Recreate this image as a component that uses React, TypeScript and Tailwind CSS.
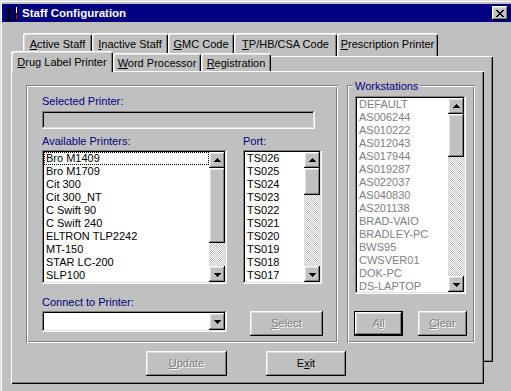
import React from "react";

const raised =
  "shadow-[inset_-1px_-1px_#000,inset_1px_1px_#fff,inset_-2px_-2px_#808080,inset_2px_2px_#dfdfdf]";
const sunken =
  "shadow-[inset_-1px_-1px_#fff,inset_1px_1px_#808080,inset_-2px_-2px_#dfdfdf,inset_2px_2px_#000]";
const etched =
  "shadow-[inset_1px_1px_#808080,inset_-1px_-1px_#fff,inset_2px_2px_#fff,inset_-2px_-2px_#808080]";
const tabEdge =
  "shadow-[inset_1px_1px_#fff,inset_2px_2px_#dfdfdf,inset_-1px_0_#000,inset_-2px_0_#808080]";
const disabledText = "text-[#808080] [text-shadow:1px_1px_0_#fff]";

const printers = [
  "Bro M1409",
  "Bro M1709",
  "Cit 300",
  "Cit 300_NT",
  "C Swift 90",
  "C Swift 240",
  "ELTRON TLP2242",
  "MT-150",
  "STAR LC-200",
  "SLP100",
];

const ports = ["TS026", "TS025", "TS024", "TS023", "TS022", "TS021", "TS020", "TS019", "TS018", "TS017"];

const workstations = [
  "DEFAULT",
  "AS006244",
  "AS010222",
  "AS012043",
  "AS017944",
  "AS019287",
  "AS022037",
  "AS040830",
  "AS201138",
  "BRAD-VAIO",
  "BRADLEY-PC",
  "BWS95",
  "CWSVER01",
  "DOK-PC",
  "DS-LAPTOP",
];

const backTabs = [
  { label: "Active Staff", width: "w-[69px]" },
  { label: "Inactive Staff", width: "w-[76px]" },
  { label: "GMC Code", width: "w-[66px]" },
  { label: "TP/HB/CSA Code", width: "w-[103px]" },
  { label: "Prescription Printer", width: "w-[101px]" },
];

// first letter is the mnemonic in every tab caption
const Mnemonic = ({ text, at = 0 }: { text: string; at?: number }) => (
  <span>
    {text.slice(0, at)}
    <u className="underline-offset-[1px]">{text[at]}</u>
    {text.slice(at + 1)}
  </span>
);

const Arrow = ({ down }: { down?: boolean }) => (
  <div className={`flex h-[16px] w-[16px] shrink-0 items-center justify-center bg-[#c0c0c0] ${raised}`}>
    <svg width="7" height="4" viewBox="0 0 7 4" shapeRendering="crispEdges" className={down ? "mt-[1px] rotate-180" : "-mt-[1px]"}>
      <rect x="3" y="0" width="1" height="1" fill="#000" />
      <rect x="2" y="1" width="3" height="1" fill="#000" />
      <rect x="1" y="2" width="5" height="1" fill="#000" />
      <rect x="0" y="3" width="7" height="1" fill="#000" />
    </svg>
  </div>
);

const ScrollBar = ({ thumb }: { thumb: number }) => (
  <div className="flex h-full w-[16px] shrink-0 flex-col">
    <Arrow />
    <div className={`w-[16px] shrink-0 bg-[#c0c0c0] ${raised}`} style={{ height: thumb }} />
    <div className="flex-1 bg-[image:repeating-conic-gradient(#c0c0c0_0%_25%,#ffffff_0%_50%)] bg-[length:2px_2px]" />
    <Arrow down />
  </div>
);

type ListProps = {
  items: string[];
  thumb: number;
  className: string;
  muted?: boolean;
  focusFirst?: boolean;
};

const ListBox = ({ items, thumb, className, muted, focusFirst }: ListProps) => (
  <div className={`flex bg-white p-[2px] ${sunken} ${className}`}>
    <div className="min-w-0 flex-1 overflow-hidden">
      {items.map((item, i) => (
        <div
          key={item}
          className={`h-[13px] whitespace-nowrap pl-[2px] leading-[13px] ${muted ? "text-[#808080]" : "text-black"} ${
            focusFirst && i === 0 ? "outline-1 outline-dotted outline-black -outline-offset-1" : ""
          }`}
        >
          {item}
        </div>
      ))}
    </div>
    <ScrollBar thumb={thumb} />
  </div>
);

const AppIcon = () => (
  <svg width="16" height="16" viewBox="0 0 16 16" shapeRendering="crispEdges">
    <path d="M5 3v12M2 8l3-5 3 5M1 15h8" stroke="#000" strokeWidth="1.4" fill="none" />
    <path d="M3 11h4" stroke="#000" strokeWidth="1" />
    <rect x="11" y="1" width="3" height="14" fill="#000" />
    <rect x="12" y="2" width="1" height="6" fill="#fff" />
    <rect x="12" y="9" width="1" height="5" fill="#e00000" />
  </svg>
);

const CloseGlyph = () => (
  <svg width="8" height="7" viewBox="0 0 8 7" shapeRendering="crispEdges">
    <path
      d="M0 0h2v1H0zM6 0h2v1H6zM1 1h2v1H1zM5 1h2v1H5zM2 2h4v1H2zM3 3h2v1H3zM2 4h4v1H2zM1 5h2v1H1zM5 5h2v1H5zM0 6h2v1H0zM6 6h2v1H6z"
      fill="#000"
    />
  </svg>
);

export default function App() {
  return (
    <div className="h-[391px] w-[511px] overflow-hidden bg-[#c0c0c0] font-['Liberation_Sans',Arial,sans-serif] text-[11px] text-black">
      <div className="h-full pl-[2px] pt-[4px] shadow-[inset_1px_1px_#dfdfdf,inset_2px_2px_#fff]">
        {/* title bar */}
        <div className="flex h-[18px] items-center bg-[#000080] pl-[2px] pr-[3px]">
          <AppIcon />
          <span className="ml-[2px] text-[11.5px] font-bold leading-[18px] text-white">Staff Configuration</span>
          <div className={`ml-auto flex h-[14px] w-[16px] items-center justify-center bg-[#c0c0c0] ${raised}`}>
            <CloseGlyph />
          </div>
        </div>

        <div className="pl-[9px] pt-[11px]">
          {/* back row of tabs */}
          <div className="ml-[12px] flex h-[23px]">
            {backTabs.map((t) => (
              <div
                key={t.label}
                className={`flex h-[23px] shrink-0 items-center justify-center rounded-t-[2px] bg-[#c0c0c0] leading-[13px] ${tabEdge} ${t.width}`}
              >
                <Mnemonic text={t.label} />
              </div>
            ))}
          </div>
          <div className="ml-[12px] h-[306px] w-[470px] shadow-[inset_0_1px_#fff,inset_-1px_-1px_#000,inset_-2px_-2px_#808080]" />

          {/* front row + page */}
          <div className="relative -mt-[311px]">
            <div className="relative z-10 flex h-[21px] items-start">
              <div className={`flex h-[21px] w-[102px] shrink-0 items-center justify-center rounded-t-[2px] bg-[#c0c0c0] pt-[2px] leading-[13px] ${tabEdge}`}>
                <Mnemonic text="Drug Label Printer" />
              </div>
              <div className={`mt-[2px] flex h-[18px] w-[88px] shrink-0 items-center justify-center rounded-t-[2px] bg-[#c0c0c0] pt-[2px] leading-[13px] ${tabEdge}`}>
                <Mnemonic text="Word Processor" />
              </div>
              <div className={`mt-[2px] flex h-[18px] w-[70px] shrink-0 items-center justify-center rounded-t-[2px] bg-[#c0c0c0] pt-[2px] leading-[13px] ${tabEdge}`}>
                <Mnemonic text="Registration" />
              </div>
            </div>

            <div className="-mt-[1px] h-[313px] w-[473px] bg-[#c0c0c0] pl-[15px] pt-[14px] shadow-[inset_1px_1px_#fff,inset_-1px_-1px_#000,inset_-2px_-2px_#808080]">
              <div className="flex gap-[9px]">
                {/* printer frame */}
                <div className={`h-[258px] w-[312px] pl-[16px] pt-[10px] ${etched}`}>
                  <div className="h-[13px] leading-[13px] text-[#000080]">Selected Printer:</div>
                  <div className={`mt-[3px] h-[18px] w-[273px] bg-[#c0c0c0] ${sunken}`} />

                  <div className="mt-[6px] flex h-[13px] leading-[13px] text-[#000080]">
                    <div className="w-[201px]">Available Printers:</div>
                    <div>Port:</div>
                  </div>
                  <div className="mt-[2px] flex gap-[16px]">
                    <ListBox items={printers} thumb={75} className="h-[134px] w-[185px]" focusFirst />
                    <ListBox items={ports} thumb={27} className="h-[134px] w-[79px]" />
                  </div>

                  <div className="mt-[12px] h-[13px] leading-[13px] text-[#000080]">Connect to Printer:</div>
                  <div className="mt-[2px] flex items-start">
                    <div className={`flex h-[21px] w-[185px] bg-white p-[2px] ${sunken}`}>
                      <div className="flex-1" />
                      <div className="h-[17px]">
                        <div className={`flex h-[17px] w-[16px] items-center justify-center bg-[#c0c0c0] ${raised}`}>
                          <svg width="7" height="4" viewBox="0 0 7 4" shapeRendering="crispEdges">
                            <path d="M0 0h7v1H0zM1 1h5v1H1zM2 2h3v1H2zM3 3h1v1H3z" fill="#000" />
                          </svg>
                        </div>
                      </div>
                    </div>
                    <button
                      className={`ml-[23px] h-[25px] w-[73px] bg-[#c0c0c0] leading-[13px] ${raised} ${disabledText}`}
                    >
                      <Mnemonic text="Select" />
                    </button>
                  </div>
                </div>

                {/* workstations frame */}
                <div className={`relative h-[258px] w-[128px] pl-[7px] pt-[11px] ${etched}`}>
                  <div className="absolute -top-[5px] left-[6px] bg-[#c0c0c0] px-[2px] leading-[13px] text-[#000080]">
                    Workstations
                  </div>
                  <ListBox items={workstations} thumb={43} className="ml-[1px] h-[198px] w-[111px]" muted />
                  <div className="mt-[17px] flex gap-[15px]">
                    <button className={`h-[25px] w-[49px] border border-black bg-[#c0c0c0] leading-[13px] ${raised} ${disabledText}`}>
                      <Mnemonic text="All" at={1} />
                    </button>
                    <button className={`h-[25px] w-[49px] bg-[#c0c0c0] leading-[13px] ${raised} ${disabledText}`}>
                      <Mnemonic text="Clear" />
                    </button>
                  </div>
                </div>
              </div>

              <div className="ml-[120px] mt-[8px] flex gap-[39px]">
                <button className={`h-[25px] w-[81px] bg-[#c0c0c0] leading-[13px] ${raised} ${disabledText}`}>
                  <Mnemonic text="Update" />
                </button>
                <button className={`h-[25px] w-[80px] bg-[#c0c0c0] leading-[13px] text-black ${raised}`}>
                  <Mnemonic text="Exit" at={1} />
                </button>
              </div>
            </div>
          </div>
        </div>
      </div>
    </div>
  );
}
